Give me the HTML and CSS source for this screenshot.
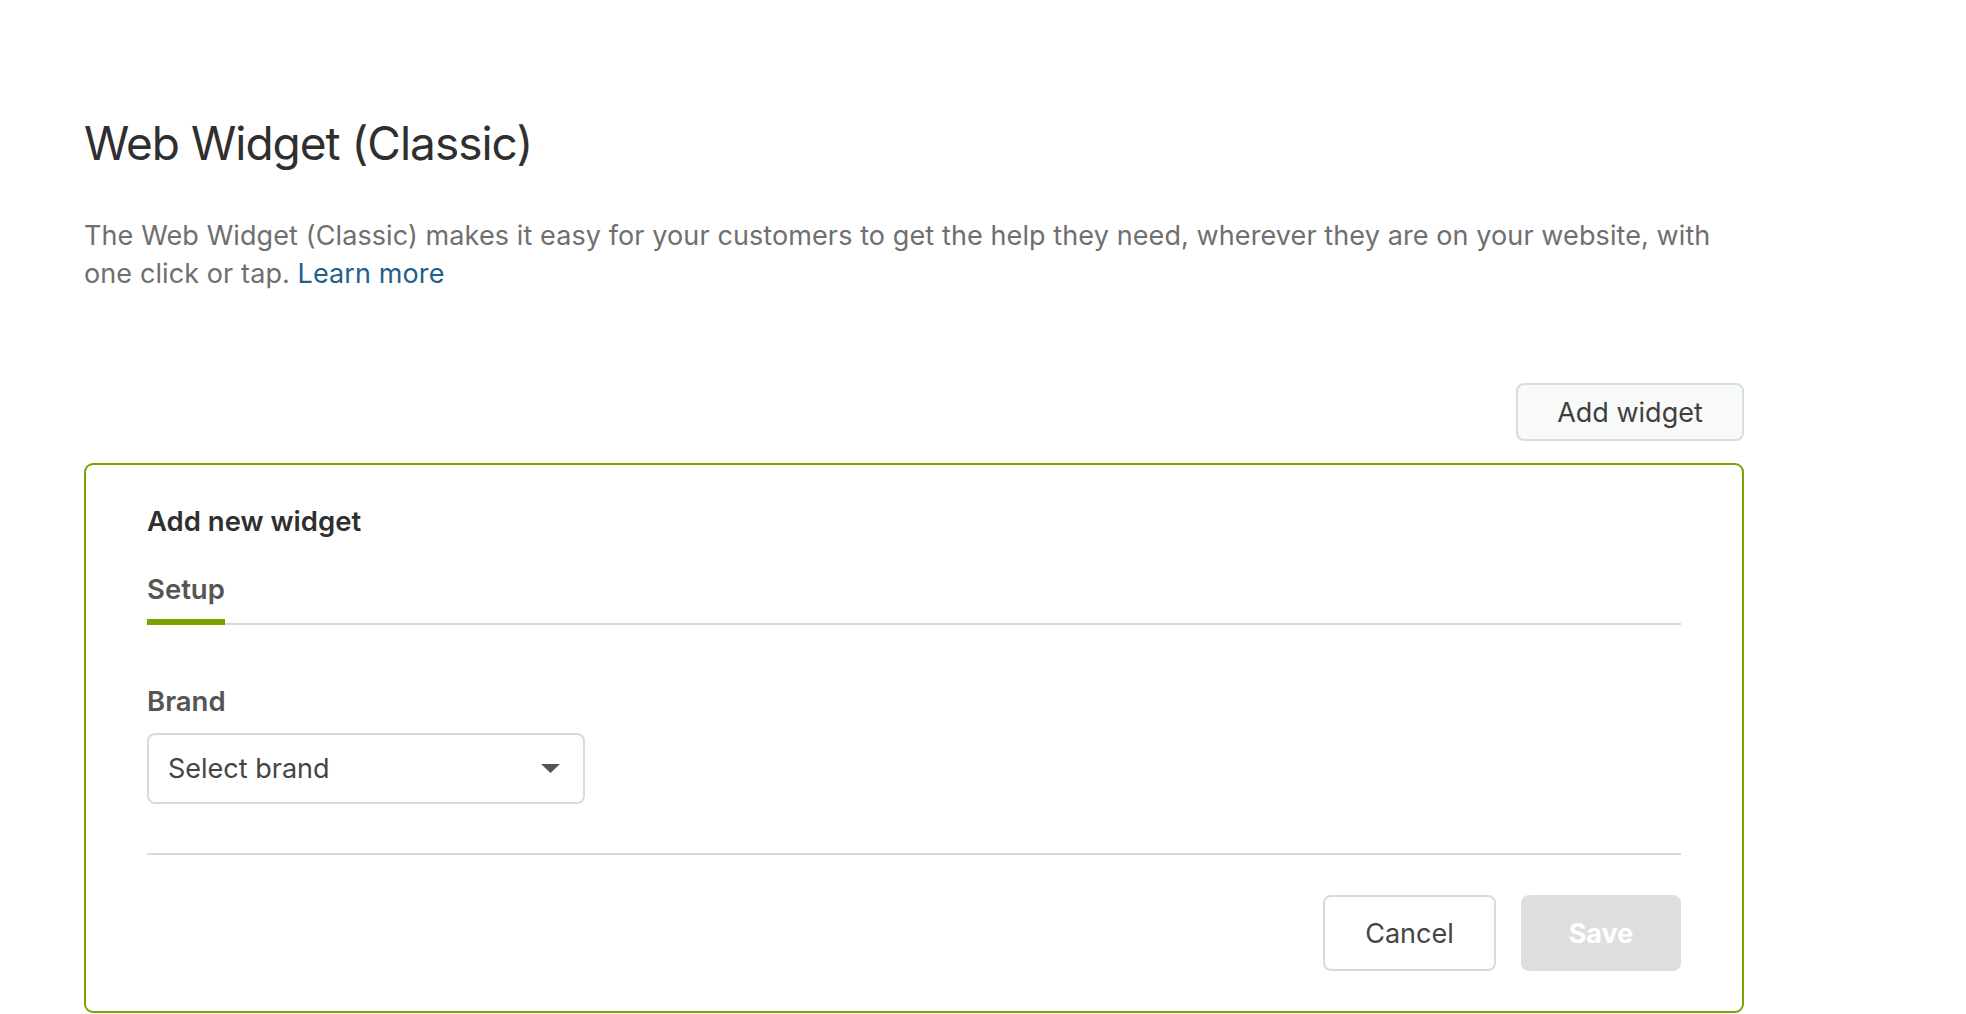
FILE: index.html
```html
<!DOCTYPE html>
<html lang="en">
<head>
<meta charset="utf-8">
<title>Web Widget (Classic)</title>
<link rel="stylesheet" href="styles.css">
</head>
<body>
<main class="page">
  <h1 class="title">Web Widget (Classic)</h1>
  <p class="intro"><span>The Web Widget (Classic) makes it easy for your customers to get the help they need, wherever they are on your website, with one click or tap.</span> <a class="link" href="#">Learn more</a></p>
  <div class="toolbar">
    <button class="btn btn-add" type="button">Add widget</button>
  </div>
  <section class="card">
    <h2 class="card-title">Add new widget</h2>
    <div class="tabs">
      <div class="tab tab-active">Setup</div>
    </div>
    <div class="field">
      <label class="label">Brand</label>
      <div class="select">
        <span class="select-text">Select brand</span>
        <svg class="caret" width="19" height="9" viewBox="0 0 19 9"><path d="M0 0 H19 L9.5 9 Z" fill="#555"/></svg>
      </div>
    </div>
    <hr class="divider">
    <div class="actions">
      <button class="btn btn-cancel" type="button">Cancel</button>
      <button class="btn btn-save" type="button">Save</button>
    </div>
  </section>
</main>
</body>
</html>
```
FILE: styles.css
```css
* { box-sizing: border-box; }
html, body { margin: 0; padding: 0; background: #fff; }
body {
  font-family: Inter, "Noto Sans", "Liberation Sans", sans-serif;
  color: #2f3941;
  padding-left: 84px;
}
.page { width: 1660px; }
.title {
  margin: 113px 0 0;
  font-size: 46px;
  line-height: 60px;
  font-weight: 400;
  letter-spacing: -1px;
  color: #2f2f2f;
}
.intro {
  margin: 44px 0 0;
  font-size: 27px;
  line-height: 38px;
  letter-spacing: 0.1px;
  color: #6f6f6f;
}
.link { color: #1f5f8b; text-decoration: none; }
.toolbar {
  display: flex;
  justify-content: flex-end;
  margin-top: 90px;
}
.btn {
  font-family: inherit;
  font-size: 27px;
  border-radius: 8px;
  cursor: pointer;
}
.btn-add {
  width: 228px;
  height: 58px;
  background: #f8f9f9;
  border: 2px solid #d8dcde;
  color: #3f3f3f;
}
.card {
  margin-top: 22px;
  border: 2px solid #78a300;
  border-radius: 9px;
  padding: 37px 61px 40px;
}
.card-title {
  margin: 0;
  font-size: 27.5px;
  line-height: 38px;
  font-weight: 600;
  color: #2f2f2f;
}
.tabs {
  margin-top: 30px;
  display: flex;
  border-bottom: 2px solid #d8d8d8;
}
.tab {
  font-size: 27.5px;
  line-height: 38px;
  font-weight: 600;
  color: #555;
  padding-bottom: 11px;
  margin-bottom: -2px;
}
.tab-active { border-bottom: 6px solid #78a300; }
.field { margin-top: 57px; }
.label {
  display: block;
  font-size: 27.5px;
  line-height: 38px;
  font-weight: 600;
  color: #555;
}
.select {
  margin-top: 13px;
  width: 438px;
  height: 71px;
  border: 2px solid #dadada;
  border-radius: 8px;
  display: flex;
  align-items: center;
  justify-content: space-between;
  padding: 0 23px 0 19px;
  font-size: 27px;
  color: #444;
}
.divider {
  margin: 49px 0 0;
  border: 0;
  height: 2px;
  background: #dadada;
}
.actions {
  margin-top: 40px;
  display: flex;
  justify-content: flex-end;
  gap: 25px;
}
.btn-cancel {
  width: 173px;
  height: 76px;
  background: #fff;
  border: 2px solid #dadada;
  color: #444;
}
.btn-save {
  width: 160px;
  height: 76px;
  background: #dedede;
  border: 0;
  color: #fff;
  font-weight: 700;
}
```
